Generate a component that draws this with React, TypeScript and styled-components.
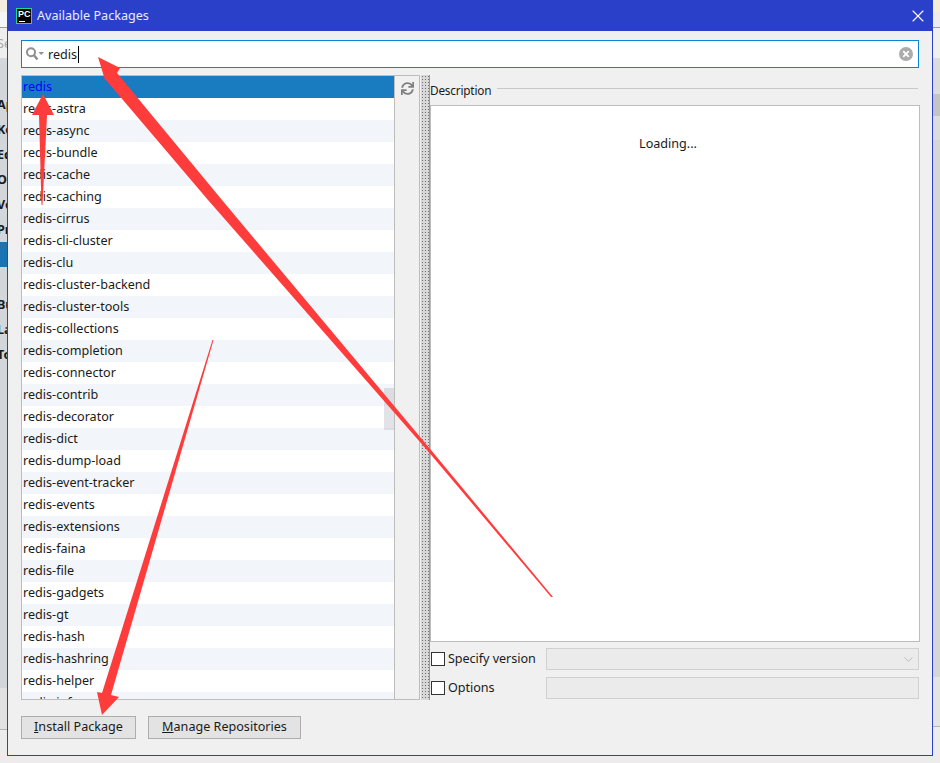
import React from 'react'
import styled, { createGlobalStyle } from 'styled-components'
import { ChevronDown, X } from 'lucide-react'
import { FaSync } from 'react-icons/fa'

const packages = [
  'redis-astra',
  'redis-async',
  'redis-bundle',
  'redis-cache',
  'redis-caching',
  'redis-cirrus',
  'redis-cli-cluster',
  'redis-clu',
  'redis-cluster-backend',
  'redis-cluster-tools',
  'redis-collections',
  'redis-completion',
  'redis-connector',
  'redis-contrib',
  'redis-decorator',
  'redis-dict',
  'redis-dump-load',
  'redis-event-tracker',
  'redis-events',
  'redis-extensions',
  'redis-faina',
  'redis-file',
  'redis-gadgets',
  'redis-gt',
  'redis-hash',
  'redis-hashring',
  'redis-helper',
  'redis-info',
]

// settings window behind the dialog, only its left edge shows
const behindRows = ['Ap', 'Ke', 'Ed', 'Op', 'Ve', 'Pr', '', '', 'Bu', 'La', 'To']

const App = () => {
  return (
    <Page>
      <GlobalStyle />
      <BehindStrip $side="left">
        <Band $height={12} $color="#f3eee0" />
        <Band $height={15} $color="#f6f6f6" />
        <Band $height={1} $color="#9c9c9c" />
        <Band $height={30} $color="#eeeeee">
          <FadedText>Se</FadedText>
        </Band>
        <BehindNav>
          {behindRows.map((label, index) => (
            <BehindRow key={index} $selected={index === 6}>
              {label}
            </BehindRow>
          ))}
        </BehindNav>
        <Band $height={41} $color="#e2e2e2" />
      </BehindStrip>
      <BehindStrip $side="right">
        <Band $height={12} $color="#f5efd8" />
        <Band $height={15} $color="#ececec" />
        <Band $height={1} $color="#9c9c9c" />
        <Band $height={30} $color="#f0f0f0" />
        <Band $height={36} $color="#dcdcdc" />
        <Band $height={22} $color="#c4c4c4" />
        <Band $height={24} $color="#dcdcdc" />
        <Band $height={537} $color="#d6d6d6" />
        <Band $height={49} $color="#e4e4e4" />
      </BehindStrip>
      <Dialog>
        <TitleBar>
          <AppLogo>
            <span>PC</span>
            <i />
          </AppLogo>
          <TitleText>Available Packages</TitleText>
          <CloseButton>
            <X size={20} strokeWidth={1.3} color="#ffffff" />
          </CloseButton>
        </TitleBar>
        <Body>
          <SearchBox>
            <SearchIcon viewBox="0 0 18 14">
              <circle cx="5" cy="5.2" r="4" fill="none" stroke="#8f8f8f" strokeWidth="2" />
              <path d="M8 8.2 L11.5 12.5" stroke="#8f8f8f" strokeWidth="2.4" />
              <path d="M12.5 5 L18 5 L15.2 8 Z" fill="#8f8f8f" />
            </SearchIcon>
            <SearchValue>redis</SearchValue>
            <ClearIcon viewBox="0 0 14 14">
              <circle cx="7" cy="7" r="7" fill="#ababab" />
              <path d="M4.2 4.2 L9.8 9.8 M9.8 4.2 L4.2 9.8" stroke="#ffffff" strokeWidth="1.8" />
            </ClearIcon>
          </SearchBox>
          <Columns>
            <ListPanel>
              <PackageList>
                <PackageRow $selected>redis</PackageRow>
                {packages.map((name, index) => (
                  <PackageRow key={name} $striped={index % 2 === 1}>
                    {name}
                  </PackageRow>
                ))}
              </PackageList>
              <ScrollThumb />
            </ListPanel>
            <SideTools>
              <FaSync size={13} color="#808080" />
            </SideTools>
            <Splitter />
            <DetailPanel>
              <DescriptionHeader>
                <DescriptionLabel>Description</DescriptionLabel>
                <HeaderRule />
              </DescriptionHeader>
              <DescriptionBox>Loading...</DescriptionBox>
              <OptionRows>
                <OptionRow>
                  <CheckLabel>
                    <CheckBox />
                    Specify version
                  </CheckLabel>
                  <DisabledField>
                    <ChevronDown size={15} strokeWidth={1} color="#a0a0a0" />
                  </DisabledField>
                </OptionRow>
                <OptionRow>
                  <CheckLabel>
                    <CheckBox />
                    Options
                  </CheckLabel>
                  <DisabledField />
                </OptionRow>
              </OptionRows>
            </DetailPanel>
          </Columns>
          <Footer>
            <FooterButton $width={115}>
              <u>I</u>nstall Package
            </FooterButton>
            <FooterButton $width={153}>
              <u>M</u>anage Repositories
            </FooterButton>
          </Footer>
        </Body>
      </Dialog>
      <Annotations viewBox="0 0 940 763">
        <polygon
          points="98,57 120,68 117,73 222,200 431,450 553,597 551,597 427,450 208,200 106,80 105,80"
          fill="#ff3c3c"
        />
        <polygon points="43,94 54,115 47,115 42.5,205 41.5,205 39,115 32,115" fill="#ff3c3c" />
        <polygon points="102,715 97,692 102,693 212.5,340 213.5,340 111,695 119,697" fill="#ff3c3c" />
      </Annotations>
    </Page>
  )
}

const GlobalStyle = createGlobalStyle`
  html, body {
    margin: 0;
    padding: 0;
    background: #ececec;
  }
`

const Page = styled.div`
  position: relative;
  width: 940px;
  height: 763px;
  overflow: hidden;
  background: #ececec;
  font-family: 'Noto Sans', 'Liberation Sans', sans-serif;
  font-size: 12.6px;
  color: #1a1a1a;
`

const BehindStrip = styled.div<{ $side: 'left' | 'right' }>`
  position: absolute;
  ${(p) => p.$side}: 0;
  top: 0;
  width: 7px;
  display: flex;
  flex-direction: column;
  overflow: hidden;
  border-bottom: 1px solid #b4b4b4;
`

const Band = styled.div<{ $height: number; $color: string }>`
  height: ${(p) => p.$height}px;
  flex: none;
  display: flex;
  align-items: center;
  background: ${(p) => p.$color};
`

const FadedText = styled.span`
  margin-left: -3px;
  color: #a8a8a8;
`

const BehindNav = styled.div`
  height: 630px;
  flex: none;
  box-sizing: border-box;
  padding-top: 34px;
  background: #d3d6db;
`

const BehindRow = styled.div<{ $selected?: boolean }>`
  height: 25px;
  line-height: 25px;
  margin-left: -3px;
  font-weight: 700;
  white-space: nowrap;
  color: #1a1a1a;
  background: ${(p) => (p.$selected ? '#1a74b4' : 'transparent')};
`

const Dialog = styled.div`
  position: absolute;
  left: 7px;
  top: 0;
  width: 926px;
  height: 756px;
  box-sizing: border-box;
  display: flex;
  flex-direction: column;
  background: #f0f0f0;
  border: 1px solid #2b40c9;
  border-top: none;
`

const TitleBar = styled.div`
  height: 31px;
  flex: none;
  display: flex;
  align-items: center;
  padding: 0 4px 0 8px;
  background: #2b40c9;
`

const AppLogo = styled.div`
  position: relative;
  width: 16px;
  height: 16px;
  box-sizing: border-box;
  background: #000;
  border: 1px solid #21d789;
  color: #fff;
  font: 700 9px/10px 'Liberation Sans', sans-serif;
  padding-left: 1px;

  i {
    position: absolute;
    left: 2px;
    bottom: 1px;
    width: 6px;
    height: 1px;
    background: #fff;
  }
`

const TitleText = styled.div`
  margin-left: 5px;
  flex: 1;
  color: #e8ecff;
`

const CloseButton = styled.div`
  display: flex;
  align-items: center;
`

const Body = styled.div`
  flex: 1;
  min-height: 0;
  display: flex;
  flex-direction: column;
  padding: 9px 12px 0 13px;
`

const SearchBox = styled.div`
  height: 28px;
  box-sizing: border-box;
  width: 898px;
  flex: none;
  display: flex;
  align-items: center;
  background: #fff;
  border: 1px solid #0a84d8;
  padding: 0 5px 0 4px;
`

const SearchIcon = styled.svg`
  width: 18px;
  height: 14px;
`

const SearchValue = styled.span`
  margin-left: 4px;
  padding-right: 1px;
  border-right: 1px solid #000;
  line-height: 17px;
  color: #1a1a1a;
`

const ClearIcon = styled.svg`
  width: 14px;
  height: 14px;
  margin-left: auto;
`

const Columns = styled.div`
  margin-top: 7px;
  height: 625px;
  flex: none;
  display: flex;
`

const ListPanel = styled.div`
  position: relative;
  width: 374px;
  flex: none;
  box-sizing: border-box;
  border: 1px solid #bdbdbd;
  background: #fff;
  overflow: hidden;
`

const PackageList = styled.div`
  display: flex;
  flex-direction: column;
`

const PackageRow = styled.div<{ $selected?: boolean; $striped?: boolean }>`
  height: 22px;
  flex: none;
  padding-left: 1px;
  line-height: 21px;
  color: ${(p) => (p.$selected ? '#0000ff' : '#1a1a1a')};
  background: ${(p) => (p.$selected ? '#1a7cc0' : p.$striped ? '#f2f5f9' : '#ffffff')};
`

const ScrollThumb = styled.div`
  position: absolute;
  right: 0;
  top: 312px;
  width: 10px;
  height: 42px;
  background: rgba(190, 194, 200, 0.45);
`

const SideTools = styled.div`
  width: 25px;
  flex: none;
  box-sizing: border-box;
  border-top: 1px solid #bdbdbd;
  border-right: 1px solid #bdbdbd;
  border-bottom: 1px solid #bdbdbd;
  display: flex;
  justify-content: center;
  padding-top: 6px;
  align-items: flex-start;
`

const Splitter = styled.div`
  width: 9px;
  flex: none;
  box-sizing: border-box;
  margin-left: 1px;
  border-right: 1px solid #9a9a9a;
  background-color: #d8d8d8;
  background-image: radial-gradient(#6e6e6e 0.6px, transparent 0.8px);
  background-size: 3px 3px;
`

const DetailPanel = styled.div`
  flex: 1;
  min-width: 0;
  display: flex;
  flex-direction: column;
`

const DescriptionHeader = styled.div`
  height: 30px;
  flex: none;
  display: flex;
  align-items: center;
  gap: 6px;
  padding-bottom: 1px;
  padding-right: 2px;
  box-sizing: border-box;
`

const DescriptionLabel = styled.span`
  font-size: 11.8px;
  letter-spacing: -0.2px;
`

const HeaderRule = styled.div`
  flex: 1;
  height: 1px;
  margin-bottom: 2px;
  background: #c8c8c8;
`

const DescriptionBox = styled.div`
  height: 537px;
  flex: none;
  box-sizing: border-box;
  border: 1px solid #bdbdbd;
  background: #fff;
  padding: 29px 14px 0 0;
  text-align: center;
`

const OptionRows = styled.div`
  margin-top: 6px;
  display: flex;
  flex-direction: column;
  gap: 7px;
`

const OptionRow = styled.div`
  height: 22px;
  display: flex;
  align-items: center;
`

const CheckLabel = styled.label`
  width: 115px;
  flex: none;
  margin-left: 1px;
  display: flex;
  align-items: center;
  gap: 3px;
  line-height: 20px;
  letter-spacing: -0.05px;
`

const CheckBox = styled.span`
  width: 12px;
  height: 12px;
  background: #fff;
  border: 1px solid #333;
`

const DisabledField = styled.div`
  width: 373px;
  height: 22px;
  box-sizing: border-box;
  display: flex;
  align-items: center;
  justify-content: flex-end;
  padding-right: 2px;
  background: #ebebeb;
  border: 1px solid #d0d0d0;
`

const Footer = styled.div`
  margin-top: 16px;
  display: flex;
  gap: 12px;
`

const FooterButton = styled.button<{ $width: number }>`
  width: ${(p) => p.$width}px;
  height: 23px;
  padding: 0 0 1px;
  font: inherit;
  line-height: 20px;
  color: #1a1a1a;
  background: #e3e3e3;
  border: 1px solid #adadad;
`

const Annotations = styled.svg`
  position: absolute;
  left: 0;
  top: 0;
  width: 940px;
  height: 763px;
  pointer-events: none;
`

export default App
